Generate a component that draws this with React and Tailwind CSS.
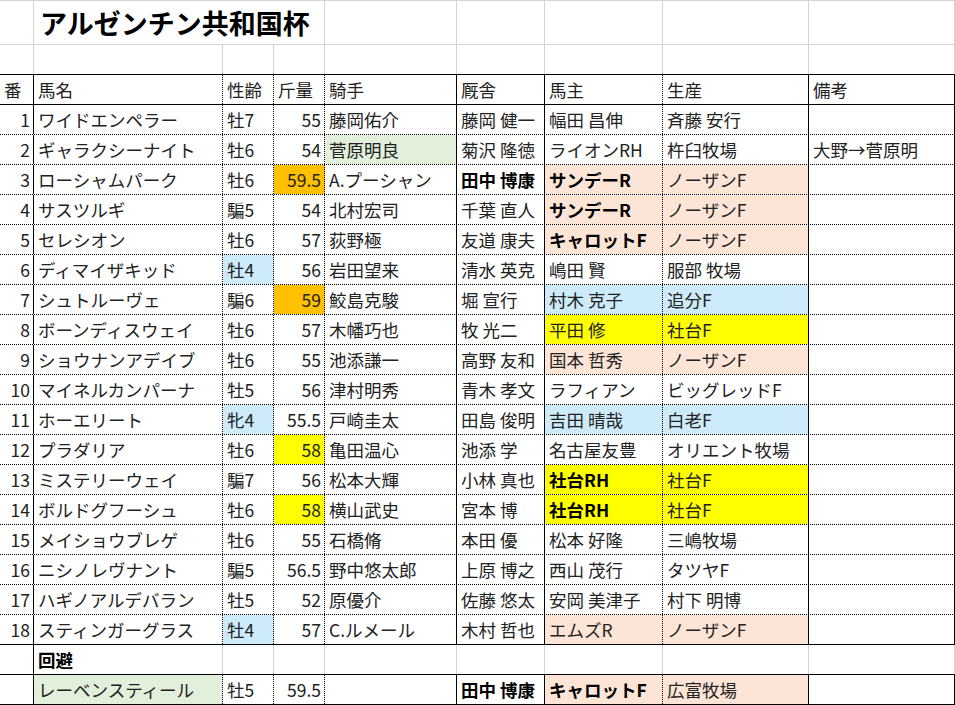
import React from 'react';

const W = ['w-[34px]', 'w-[189px]', 'w-[51px]', 'w-[51px]', 'w-[132px]', 'w-[88px]', 'w-[118px]', 'w-[146px]', 'w-[146px]'];
// right edge of each column inside the table
const TR = ['border-r border-solid border-black', 'border-r border-dotted border-black', 'border-r border-dotted border-black', 'border-r border-dotted border-black', 'border-r border-solid border-black', 'border-r border-solid border-black', 'border-r border-dotted border-black', 'border-r border-solid border-black', 'border-r border-solid border-black'];
const GR = 'border-r border-solid border-[#d4d4d4]';
const BG = { g: 'bg-[#e2efda]', o: 'bg-[#ffc000]', y: 'bg-[#ffff00]', u: 'bg-[#cdebf9]', p: 'bg-[#fce4d6]' };

const rows = [
  { c: ['1', 'ワイドエンペラー', '牡7', '55', '藤岡佑介', '藤岡 健一', '幅田 昌伸', '斉藤 安行', ''] },
  { c: ['2', 'ギャラクシーナイト', '牡6', '54', '菅原明良', '菊沢 隆徳', 'ライオンRH', '杵臼牧場', '大野→菅原明'], bg: { 4: 'g' } },
  { c: ['3', 'ローシャムパーク', '牡6', '59.5', 'A.プーシャン', '田中 博康', 'サンデーR', 'ノーザンF', ''], bg: { 3: 'o', 6: 'p', 7: 'p' }, b: [5, 6] },
  { c: ['4', 'サスツルギ', '騙5', '54', '北村宏司', '千葉 直人', 'サンデーR', 'ノーザンF', ''], bg: { 6: 'p', 7: 'p' }, b: [6] },
  { c: ['5', 'セレシオン', '牡6', '57', '荻野極', '友道 康夫', 'キャロットF', 'ノーザンF', ''], bg: { 6: 'p', 7: 'p' }, b: [6] },
  { c: ['6', 'ディマイザキッド', '牡4', '56', '岩田望来', '清水 英克', '嶋田 賢', '服部 牧場', ''], bg: { 2: 'u' } },
  { c: ['7', 'シュトルーヴェ', '騙6', '59', '鮫島克駿', '堀 宣行', '村木 克子', '追分F', ''], bg: { 3: 'o', 6: 'u', 7: 'u' } },
  { c: ['8', 'ボーンディスウェイ', '牡6', '57', '木幡巧也', '牧 光二', '平田 修', '社台F', ''], bg: { 6: 'y', 7: 'y' } },
  { c: ['9', 'ショウナンアデイブ', '牡6', '55', '池添謙一', '高野 友和', '国本 哲秀', 'ノーザンF', ''], bg: { 6: 'p', 7: 'p' } },
  { c: ['10', 'マイネルカンパーナ', '牡5', '56', '津村明秀', '青木 孝文', 'ラフィアン', 'ビッグレッドF', ''] },
  { c: ['11', 'ホーエリート', '牝4', '55.5', '戸崎圭太', '田島 俊明', '吉田 晴哉', '白老F', ''], bg: { 2: 'u', 6: 'u', 7: 'u' } },
  { c: ['12', 'プラダリア', '牡6', '58', '亀田温心', '池添 学', '名古屋友豊', 'オリエント牧場', ''], bg: { 3: 'y' } },
  { c: ['13', 'ミステリーウェイ', '騙7', '56', '松本大輝', '小林 真也', '社台RH', '社台F', ''], bg: { 6: 'y', 7: 'y' }, b: [6] },
  { c: ['14', 'ボルドグフーシュ', '牡6', '58', '横山武史', '宮本 博', '社台RH', '社台F', ''], bg: { 3: 'y', 6: 'y', 7: 'y' }, b: [6] },
  { c: ['15', 'メイショウブレゲ', '牡6', '55', '石橋脩', '本田 優', '松本 好隆', '三嶋牧場', ''] },
  { c: ['16', 'ニシノレヴナント', '騙5', '56.5', '野中悠太郎', '上原 博之', '西山 茂行', 'タツヤF', ''] },
  { c: ['17', 'ハギノアルデバラン', '牡5', '52', '原優介', '佐藤 悠太', '安岡 美津子', '村下 明博', ''] },
  { c: ['18', 'スティンガーグラス', '牡4', '57', 'C.ルメール', '木村 哲也', 'エムズR', 'ノーザンF', ''], bg: { 2: 'u', 6: 'p', 7: 'p' } },
];

function Cell({ i, text, edge, bg, bold, right }) {
  return (
    <div className={`${W[i]} ${edge} ${bg || ''} h-full shrink-0 flex items-center overflow-hidden whitespace-nowrap ${right ? 'justify-end pr-[3px]' : 'pl-[4px]'} ${bold ? 'font-bold text-black' : ''}`}>
      {text}
    </div>
  );
}

function Row({ cells, bottom, edges, bg = {}, b = [], rightCols = [] }) {
  return (
    <div className={`flex h-[30px] border-b ${bottom}`}>
      {cells.map((t, i) => (
        <Cell key={i} i={i} text={t} edge={edges[i]} bg={BG[bg[i]]} bold={b.includes(i)} right={rightCols.includes(i)} />
      ))}
    </div>
  );
}

export default function App() {
  const gray = W.map(() => GR);
  const mixed = [TR[0], GR, GR, GR, GR, GR, GR, GR, GR];
  return (
    <div className="w-[955px] h-[705px] overflow-hidden bg-white text-[17.5px] leading-none text-[#222] font-['Noto_Sans_CJK_JP','Noto_Sans',sans-serif] border-t border-[#d4d4d4]">
      {/* title */}
      <div className="flex h-[44px] border-b border-solid border-[#d4d4d4]">
        <div className={`${W[0]} ${GR} h-full shrink-0`} />
        <div className={`w-[291px] ${GR} h-full shrink-0 flex items-center pl-[6px] text-[27px] font-bold text-black whitespace-nowrap`}>アルゼンチン共和国杯</div>
        {[4, 5, 6, 7, 8].map(i => <div key={i} className={`${W[i]} ${GR} h-full shrink-0`} />)}
      </div>
      <Row cells={['', '', '', '', '', '', '', '', '']} bottom="border-solid border-black" edges={gray} />
      <Row cells={['番', '馬名', '性齢', '斤量', '騎手', '厩舎', '馬主', '生産', '備考']} bottom="border-solid border-black" edges={TR} />
      {rows.map((r, k) => (
        <Row key={k} cells={r.c} bg={r.bg} b={r.b} rightCols={[0, 3]}
          bottom={k === rows.length - 1 ? 'border-solid border-black' : 'border-dotted border-black'} edges={TR} />
      ))}
      <Row cells={['', '回避', '', '', '', '', '', '', '']} b={[1]} bottom="border-solid border-black" edges={mixed} />
      <Row cells={['', 'レーベンスティール', '牡5', '59.5', '', '田中 博康', 'キャロットF', '広富牧場', '']}
        bg={{ 1: 'g', 6: 'p', 7: 'p' }} b={[5, 6]} rightCols={[3]} bottom="border-solid border-black" edges={TR} />
    </div>
  );
}
